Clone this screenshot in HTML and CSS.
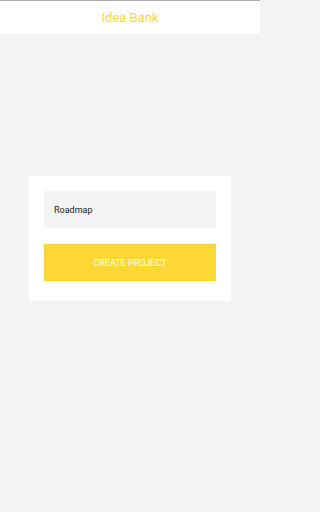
FILE: index.html
```html
<!DOCTYPE html>
<html>
<head>
<meta charset="utf-8">
<meta name="viewport" content="width=260">
<link rel="stylesheet" href="styles.css">
</head>
<body>
<div class="app">
  <header class="topbar">
    <span class="title">Idea Bank</span>
  </header>
  <main class="content">
    <div class="card">
      <div class="field">Roadmap</div>
      <button class="create">CREATE PROJECT</button>
    </div>
  </main>
</div>
</body>
</html>
```

FILE: styles.css
```css
* { box-sizing: border-box; }
html, body {
  margin: 0;
  padding: 0;
}
body {
  font-family: Roboto, "Liberation Sans", sans-serif;
  background: #f2f3f5;
}
.app {
  display: flex;
  flex-direction: column;
  width: 260px;
  height: 512px;
  border-top: 1px solid #acacac;
  background: #f2f3f5;
}
.topbar {
  height: 33px;
  flex: none;
  background: #ffffff;
  display: flex;
  align-items: center;
  justify-content: center;
}
.title {
  color: #fdd835;
  font-size: 13px;
}
.content {
  flex: 1;
  display: flex;
  justify-content: center;
  padding-top: 142px;
}
.card {
  width: 202px;
  height: 125px;
  background: #ffffff;
  padding: 15px 15px 20px;
  display: flex;
  flex-direction: column;
  gap: 16px;
}
.field {
  height: 37px;
  flex: none;
  background: #f2f3f5;
  color: #222;
  font-size: 9px;
  display: flex;
  align-items: center;
  padding-left: 10px;
}
.create {
  height: 37px;
  flex: none;
  border: none;
  background: #fdd835;
  color: #ffffff;
  font-family: Roboto, "Liberation Sans", sans-serif;
  font-size: 9px;
  padding: 0;
}
```
